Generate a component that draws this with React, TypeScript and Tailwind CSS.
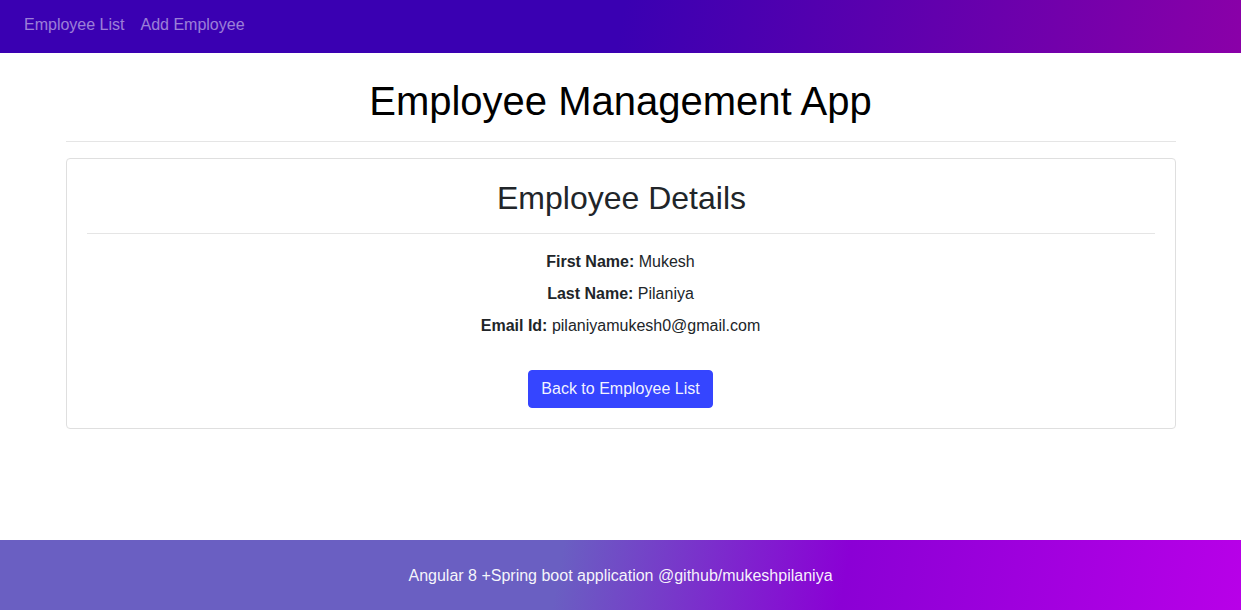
export default function App() {
  return (
    <div className="min-h-screen flex flex-col bg-white font-['Liberation_Sans',Arial,sans-serif] text-[#212529]">
      {/* Navbar */}
      <nav className="h-[53px] flex items-start pt-[13px] px-4 bg-[linear-gradient(100deg,#3a00b2_50%,#8a00a8)]">
        <a href="#" className="px-2 text-base leading-6 text-white/50">Employee List</a>
        <a href="#" className="px-2 text-base leading-6 text-white/50">Add Employee</a>
      </nav>

      <main className="flex-1">
        <div className="w-[1110px] mx-auto pt-6">
          <h1 className="text-center text-[40px] leading-[48px] text-black">Employee Management App</h1>
          <hr className="mt-4 mb-4 border-t border-[#e5e5e5]" />

          {/* Card */}
          <div className="border border-[#dfdfdf] rounded-[4px] p-5">
            <h2 className="text-center text-[32px] leading-[38px] pl-[2px]">Employee Details</h2>
            <hr className="mt-4 mb-4 border-t border-[#e5e5e5]" />
            <div className="text-center text-base leading-6">
              <p className="mb-2"><b>First Name:</b> Mukesh</p>
              <p className="mb-2"><b>Last Name:</b> Pilaniya</p>
              <p className="mb-2"><b>Email Id:</b> pilaniyamukesh0@gmail.com</p>
              <div className="pt-6">
                <button className="bg-[#3545ff] border border-[#3545ff] text-white/95 text-base leading-6 px-3 py-[6px] rounded-[4px]">
                  Back to Employee List
                </button>
              </div>
            </div>
          </div>
        </div>
      </main>

      {/* Footer */}
      <footer className="h-[70px] flex items-center justify-center pt-[2px] text-base text-white/95 bg-[linear-gradient(100deg,#6a5fc2_45%,#8b00d5_68%,#b800e8)]">
        Angular 8 +Spring boot application @github/mukeshpilaniya
      </footer>
    </div>
  );
}
